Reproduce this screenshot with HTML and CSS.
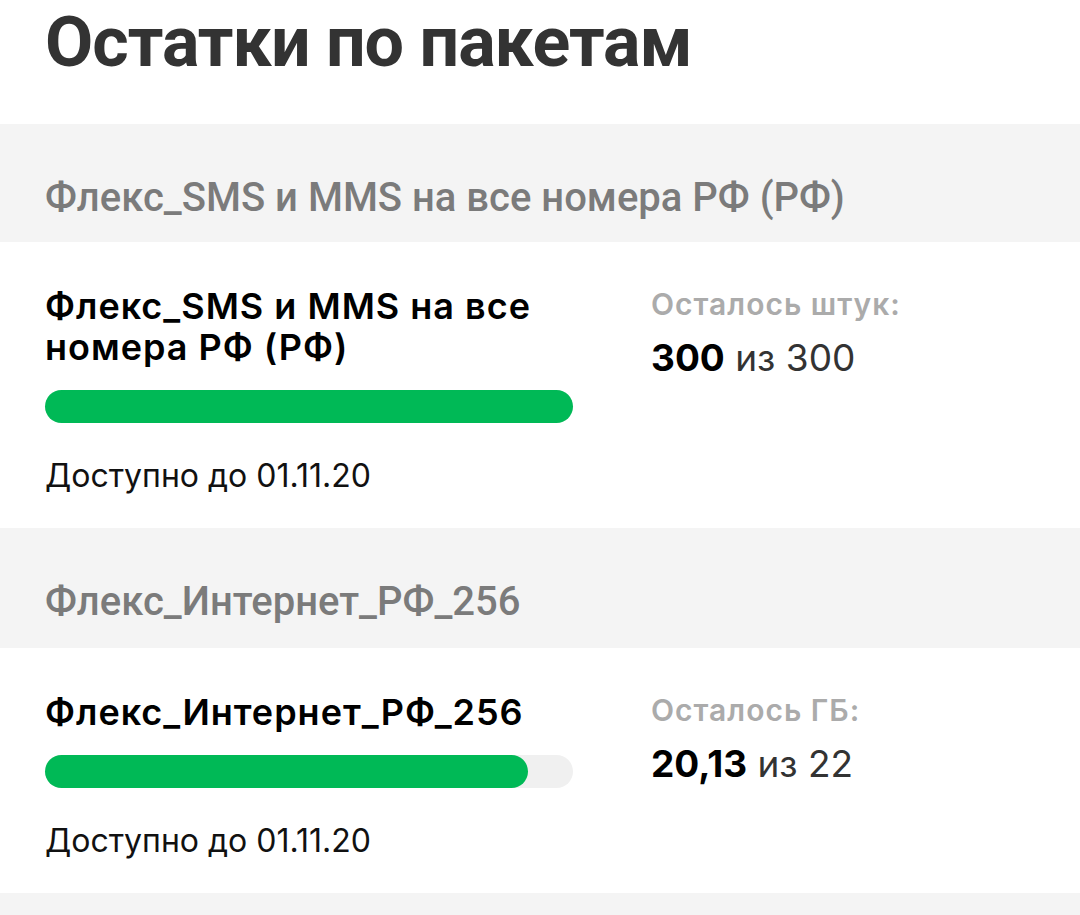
FILE: index.html
```html
<!DOCTYPE html>
<html lang="ru">
<head>
    <meta charset="UTF-8">
    <meta name="viewport" content="width=device-width, initial-scale=1.0">
    <title>Остатки по пакетам</title>
    <link rel="stylesheet" href="styles.css">
</head>
<body>
    <main>
        <h1 class="titulo">Остатки по пакетам</h1>

        <section class="pacote">
            <div class="cabecalho">Флекс_SMS и MMS на все номера РФ (РФ)</div>
            <div class="cartao">
                <div class="info">
                    <div class="nome">Флекс_SMS и MMS на все номера РФ (РФ)</div>
                    <div class="barra"><div class="preenchido" style="width: 100%"></div></div>
                    <div class="validade">Доступно до 01.11.20</div>
                </div>
                <div class="resto">
                    <div class="rotulo">Осталось штук:</div>
                    <div class="valor"><b>300</b> из 300</div>
                </div>
            </div>
        </section>

        <section class="pacote">
            <div class="cabecalho">Флекс_Интернет_РФ_256</div>
            <div class="cartao">
                <div class="info">
                    <div class="nome">Флекс_Интернет_РФ_256</div>
                    <div class="barra"><div class="preenchido" style="width: 91.5%"></div></div>
                    <div class="validade">Доступно до 01.11.20</div>
                </div>
                <div class="resto">
                    <div class="rotulo">Осталось ГБ:</div>
                    <div class="valor"><b>20,13</b> из 22</div>
                </div>
            </div>
        </section>

        <div class="cabecalho vazio"></div>
    </main>
</body>
</html>
```

FILE: styles.css
```css
* {
    padding: 0;
    margin: 0;
    box-sizing: border-box;
}
body {
    background-color: #fff;
    font-family: Inter, "Noto Sans", sans-serif;
    color: #000;
}
main {
    width: 100%;
}
.titulo {
    font-family: Roboto, "Liberation Sans", sans-serif;
    font-weight: 700;
    font-size: 70px;
    line-height: 84px;
    color: #333;
    padding: 0 45px;
    height: 124px;
    letter-spacing: -1px;
}
.cabecalho {
    background-color: #f4f4f4;
    height: 118px;
    padding: 51px 45px 0;
    font-family: Roboto, "Liberation Sans", sans-serif;
    font-weight: 500;
    font-size: 40px;
    line-height: 46px;
    color: #7b7b7b;
}
.pacote + .pacote .cabecalho {
    height: 120px;
}
.cabecalho.vazio {
    height: 22px;
    padding: 0;
}
.cartao {
    display: flex;
    padding: 44px 45px 32px;
}
.info {
    width: 528px;
}
.nome {
    font-size: 36px;
    font-weight: 600;
    line-height: 41px;
    letter-spacing: 1px;
}
.barra {
    height: 33px;
    margin-top: 22px;
    border-radius: 17px;
    background-color: #f0f0f0;
}
.preenchido {
    height: 100%;
    border-radius: 17px;
    background-color: #00b956;
}
.validade {
    margin-top: 33px;
    font-size: 32px;
    line-height: 40px;
    color: #111;
}
.resto {
    margin-left: 78px;
}
.rotulo {
    font-size: 30px;
    font-weight: 600;
    line-height: 36px;
    color: #ababab;
    letter-spacing: 1px;
}
.valor {
    margin-top: 14px;
    font-size: 37px;
    line-height: 44px;
    color: #333;
}
.valor b {
    font-weight: 700;
    color: #000;
}
```
